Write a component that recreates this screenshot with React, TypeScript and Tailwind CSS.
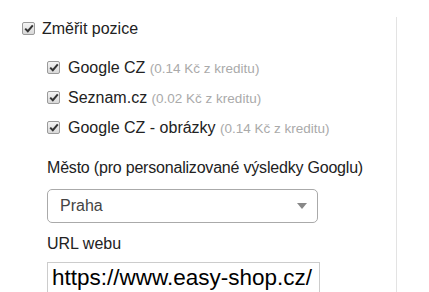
import * as React from "react";

const engines = [
	{ name: "Google CZ", price: "(0.14 Kč z kreditu)" },
	{ name: "Seznam.cz", price: "(0.02 Kč z kreditu)" },
	{ name: "Google CZ - obrázky", price: "(0.14 Kč z kreditu)" },
];

function Check() {
	return (
		<span className="flex h-[13px] w-[13px] shrink-0 items-center justify-center rounded-[2px] border border-[#9a9a9a] bg-gradient-to-b from-[#f4f4f4] to-[#d8d8d8]">
			<svg width="10" height="9" viewBox="0 0 10 9">
				<path d="M1.2 4.6 L3.8 7.2 L8.8 1.4" fill="none" stroke="#333" strokeWidth="2" />
			</svg>
		</span>
	);
}

export default function App() {
	return (
		<div className="relative h-[292px] w-[429px] overflow-hidden bg-white font-['Liberation_Sans',Arial,sans-serif] text-[#222]">
			<div className="absolute bottom-0 left-[396px] top-[17px] w-px bg-[#e3e3e3]" />
			<div className="pl-[22px] pt-[20px]">
				<label className="flex h-[17px] items-center gap-[7px] text-[16px]">
					<Check />
					<span>Změřit pozice</span>
				</label>
				<div className="flex flex-col gap-[13px] pl-[25px] pt-[22px]">
					{engines.map((e) => (
						<label key={e.name} className="flex h-[17px] items-center gap-[8px] text-[16px]">
							<Check />
							<span>
								{e.name} <span className="text-[13.5px] text-[#aaa]">{e.price}</span>
							</span>
						</label>
					))}
				</div>
				<div className="pl-[25px] pt-[20px]">
					<div className="text-[16px] tracking-[-0.2px]">Město (pro personalizované výsledky Googlu)</div>
					<div className="mt-[9px] flex h-[34px] w-[271px] items-center justify-between rounded-[5px] border border-[#aaa] pl-[12px] pr-[10px] text-[16px] text-[#444]">
						<span>Praha</span>
						<svg width="10" height="6" viewBox="0 0 10 6">
							<path d="M0 0 H10 L5 6 Z" fill="#888" />
						</svg>
					</div>
					<div className="mt-[9px] text-[16px]">URL webu</div>
					<div className="mt-[6px] flex h-[32px] w-[273px] items-center border border-[#ccc] pl-[4px] text-[22.5px] text-black">
						https://www.easy-shop.cz/
					</div>
				</div>
			</div>
		</div>
	);
}
